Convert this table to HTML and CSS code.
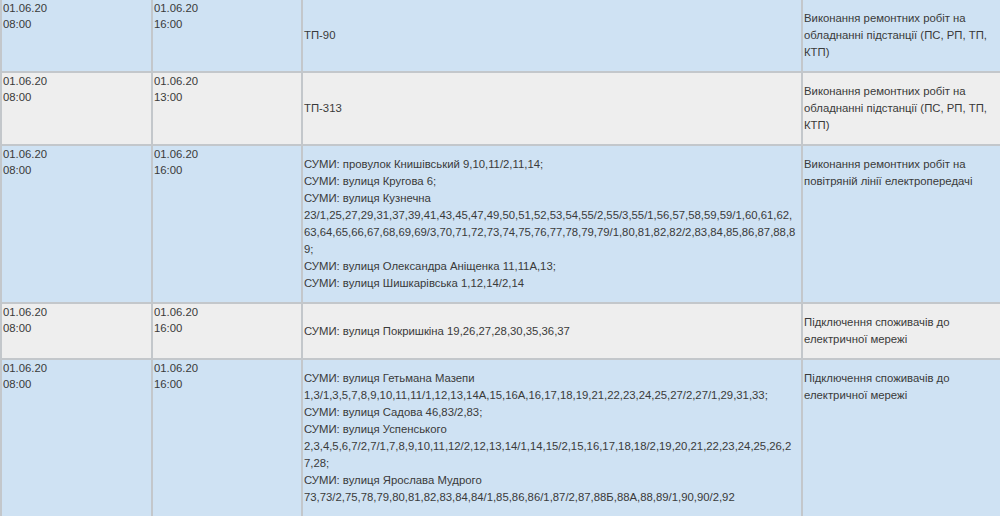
FILE: index.html
```html
<!DOCTYPE html>
<html lang="uk">
<head>
    <meta charset="UTF-8">
    <meta name="viewport" content="width=device-width, initial-scale=1.0">
    <title>Графік відключень</title>
    <link rel="stylesheet" href="styles.css">
</head>
<body>
    <table class="schedule">
        <colgroup>
            <col class="col-start">
            <col class="col-end">
            <col class="col-place">
            <col class="col-reason">
        </colgroup>
        <tbody>
            <tr class="row-blue">
                <td class="time">01.06.20<br>08:00</td>
                <td class="time">01.06.20<br>16:00</td>
                <td class="place">ТП-90</td>
                <td class="reason">Виконання ремонтних робіт на обладнанні підстанції (ПС, РП, ТП, КТП)</td>
            </tr>
            <tr class="row-grey">
                <td class="time">01.06.20<br>08:00</td>
                <td class="time">01.06.20<br>13:00</td>
                <td class="place">ТП-313</td>
                <td class="reason">Виконання ремонтних робіт на обладнанні підстанції (ПС, РП, ТП, КТП)</td>
            </tr>
            <tr class="row-blue">
                <td class="time">01.06.20<br>08:00</td>
                <td class="time">01.06.20<br>16:00</td>
                <td class="place">СУМИ: провулок Книшівський 9,10,11/2,11,14;<br>СУМИ: вулиця Кругова 6;<br>СУМИ: вулиця Кузнечна 23/1,25,27,29,31,37,39,41,43,45,47,49,50,51,52,53,54,55/2,55/3,55/1,56,57,58,59,59/1,60,61,62,63,64,65,66,67,68,69,69/3,70,71,72,73,74,75,76,77,78,79,79/1,80,81,82,82/2,83,84,85,86,87,88,89;<br>СУМИ: вулиця Олександра Аніщенка 11,11А,13;<br>СУМИ: вулиця Шишкарівська 1,12,14/2,14</td>
                <td class="reason">Виконання ремонтних робіт на повітряній лінії електропередачі</td>
            </tr>
            <tr class="row-grey">
                <td class="time">01.06.20<br>08:00</td>
                <td class="time">01.06.20<br>16:00</td>
                <td class="place">СУМИ: вулиця Покришкіна 19,26,27,28,30,35,36,37</td>
                <td class="reason">Підключення споживачів до електричної мережі</td>
            </tr>
            <tr class="row-blue">
                <td class="time">01.06.20<br>08:00</td>
                <td class="time">01.06.20<br>16:00</td>
                <td class="place">СУМИ: вулиця Гетьмана Мазепи 1,3/1,3,5,7,8,9,10,11,11/1,12,13,14А,15,16А,16,17,18,19,21,22,23,24,25,27/2,27/1,29,31,33;<br>СУМИ: вулиця Садова 46,83/2,83;<br>СУМИ: вулиця Успенського 2,3,4,5,6,7/2,7/1,7,8,9,10,11,12/2,12,13,14/1,14,15/2,15,16,17,18,18/2,19,20,21,22,23,24,25,26,27,28;<br>СУМИ: вулиця Ярослава Мудрого 73,73/2,75,78,79,80,81,82,83,84,84/1,85,86,86/1,87/2,87,88Б,88А,88,89/1,90,90/2,92</td>
                <td class="reason">Підключення споживачів до електричної мережі</td>
            </tr>
        </tbody>
    </table>
</body>
</html>
```

FILE: styles.css
```css
body {
    margin: 0;
    overflow: hidden;
    font-family: "Liberation Sans", Arial, sans-serif;
    font-size: 11.33px;
    color: #3a3a3a;
    background-color: #fff;
}
.schedule {
    width: 1006px;
    table-layout: fixed;
    border-collapse: collapse;
}
.col-start {
    width: 151px;
}
.col-end {
    width: 150px;
}
.col-place {
    width: 500px;
}
.col-reason {
    width: 205px;
}
.schedule td {
    border: 2px solid #c3c7cb;
    padding: 0 2px 0 1px;
    overflow-wrap: break-word;
}
.schedule tr:first-child td {
    border-top: none;
}
.row-blue {
    background-color: #cfe2f3;
}
.row-grey {
    background-color: #eeeeee;
}
.schedule .time {
    vertical-align: top;
    line-height: 16px;
}
.schedule .place,
.schedule .reason {
    line-height: 17px;
    padding-top: 10px;
    padding-bottom: 10px;
}
.schedule .place {
    vertical-align: middle;
    padding-right: 5px;
}
.schedule .reason {
    vertical-align: top;
}
```
